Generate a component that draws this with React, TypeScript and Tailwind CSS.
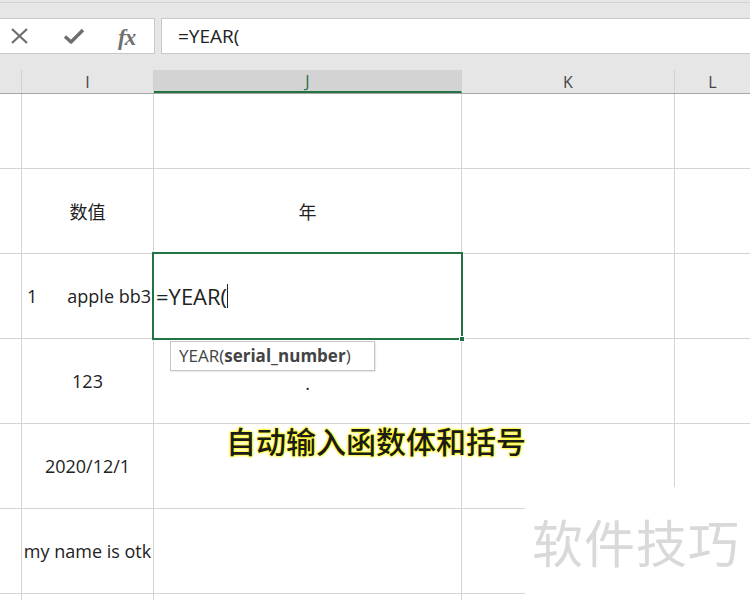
const cols = [
  { key: "rh", w: "w-[22px]" },
  { key: "I", w: "w-[132px]" },
  { key: "J", w: "w-[308px]" },
  { key: "K", w: "w-[213px]" },
  { key: "L", w: "flex-1" },
];

type Row = { h: string; cells: React.ReactNode[] };

const rows: Row[] = [
  { h: "h-[75px]", cells: [null, null, null, null, null] },
  { h: "h-[85px]", cells: [null, <span className="font-['Noto_Sans_CJK_SC',sans-serif]">数值</span>, <span className="font-['Noto_Sans_CJK_SC',sans-serif]">年</span>, null, null] },
  {
    h: "h-[85px]",
    cells: [
      null,
      <div className="w-full flex items-center justify-between pl-[5px] pr-[2px]">
        <span>1</span>
        <span className="whitespace-nowrap">apple bb3</span>
      </div>,
      null,
      null,
      null,
    ],
  },
  { h: "h-[85px]", cells: [null, "123", <span className="pt-[4px]">.</span>, null, null] },
  { h: "h-[85px]", cells: [null, "2020/12/1", null, null, null] },
  { h: "h-[85px]", cells: [null, <span className="whitespace-nowrap">my name is otk</span>, null, null, null] },
  { h: "h-[40px]", cells: [null, null, null, null, null] },
];

function FormulaBar() {
  return (
    <div className="h-[70px] bg-[#e6e6e6] pt-[2px]">
      <div className="h-full border-t border-[#d2d2d2] pt-[15px]">
        <div className="flex h-[36px] gap-[6px]">
          <div className="w-[155px] bg-white border border-l-0 border-[#c8c8c8] relative">
            <svg className="absolute left-[10px] top-[8px]" width="20" height="18" viewBox="0 0 20 18">
              <path d="M2 2 L17 16 M17 2 L2 16" stroke="#6e6e6e" strokeWidth="2.2" fill="none" />
            </svg>
            <svg className="absolute left-[63px] top-[9px]" width="22" height="17" viewBox="0 0 22 17">
              <path d="M2 8.5 L8 14 L20 2" stroke="#6e6e6e" strokeWidth="3.4" fill="none" strokeLinejoin="round" />
            </svg>
            <span className="absolute left-[118px] top-[2px] text-[23px] italic font-bold text-[#707070] font-['Liberation_Serif',serif] tracking-[-1px]">
              fx
            </span>
          </div>
          <div className="flex-1 bg-white border border-r-0 border-[#c8c8c8] flex items-center pl-[16px] text-[19px] text-[#222] font-['Open_Sans',sans-serif]">
            =YEAR(
          </div>
        </div>
      </div>
    </div>
  );
}

function HeaderRow() {
  return (
    <div className="flex h-[24px] bg-[#e6e6e6] border-b border-[#a6a6a6] text-[16px] text-[#444] font-['Open_Sans',sans-serif]">
      {cols.map((c) => (
        <div
          key={c.key}
          className={`${c.w} h-full flex items-center justify-center ${c.key === "L" ? "" : "border-r border-[#d0d0d0]"} ${c.key === "J" ? "bg-[#d3d3d3] border-b-2 border-b-[#217346] text-[#217346]" : ""}`}
        >
          {c.key === "rh" ? "" : c.key}
        </div>
      ))}
    </div>
  );
}

export default function App() {
  return (
    <div className="relative w-[750px] h-[600px] overflow-hidden bg-white font-['Open_Sans','Noto_Sans_CJK_SC',sans-serif] text-[#222]">
      <FormulaBar />
      <HeaderRow />
      {rows.map((r, i) => (
        <div key={i} className={`flex ${r.h} border-b border-[#d4d4d4]`}>
          {cols.map((c, j) => (
            <div
              key={c.key}
              className={`${c.w} h-full flex items-center justify-center text-[18px] ${c.key === "L" ? "" : "border-r border-[#d4d4d4]"}`}
            >
              {r.cells[j]}
            </div>
          ))}
        </div>
      ))}

      {/* active cell */}
      <div className="absolute left-[152px] top-[252px] w-[311px] h-[88px] border-2 border-[#217346] flex items-center pl-[2px]">
        <span className="text-[22px] leading-none text-[#222]">=YEAR(</span>
        <span className="w-px h-[24px] bg-[#222]" />
        <div className="absolute right-[-4px] bottom-[-4px] w-[6px] h-[6px] bg-[#217346] border border-white" />
      </div>

      {/* function tooltip */}
      <div className="absolute left-[170px] top-[341px] w-[205px] h-[30px] bg-white border border-[#c6c6c6] shadow-[1px_1px_1px_rgba(0,0,0,0.08)] flex items-center pl-[8px] text-[17px] text-[#444]">
        YEAR(<b className="font-bold">serial_number</b>)
      </div>

      {/* caption */}
      <div className="absolute left-[226px] top-[420px] text-[30px] leading-[40px] font-medium text-[#1b1b1b] font-['Noto_Sans_CJK_SC',sans-serif] [text-shadow:0_0_2px_#ffff00,0_0_2px_#ffff00,0_0_3px_#ffee00]">
        自动输入函数体和括号
      </div>

      {/* watermark */}
      <div className="absolute left-[525px] top-[487px] w-[225px] h-[113px] bg-white flex items-center pl-[7px]">
        <span className="text-[51px] leading-none text-[#d9d9d9] font-['Noto_Sans_CJK_SC',sans-serif] tracking-[1px] -mt-[4px]">
          软件技巧
        </span>
      </div>
    </div>
  );
}
